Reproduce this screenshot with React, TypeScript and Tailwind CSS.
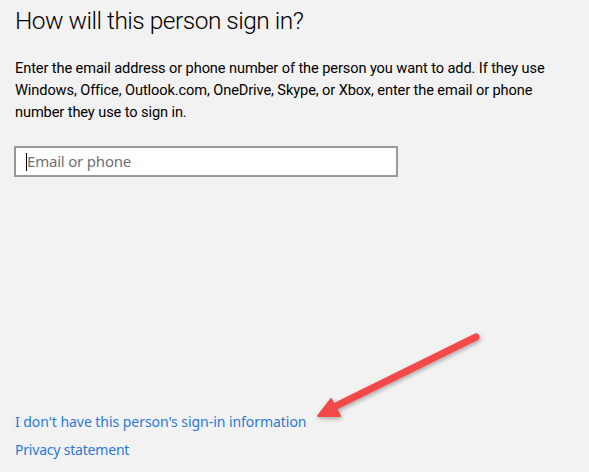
export default function App() {
  return (
    <div
      className="relative flex h-[472px] w-[589px] flex-col overflow-hidden bg-[#f2f2f2] pl-[15px] pr-[10px] text-[#000]"
      style={{ fontFamily: '"Noto Sans", "Open Sans", sans-serif' }}
    >
      <h1
        className="mt-[3px] text-[24.5px] font-light leading-[36px] tracking-[-0.5px]"
        style={{ fontFamily: 'Roboto, "Noto Sans", sans-serif' }}
      >
        How will this person sign in?
      </h1>
      <p
        className="mt-[18px] text-[14.6px] leading-[22px] tracking-[-0.1px]"
        style={{ fontFamily: 'Roboto, "Noto Sans", sans-serif' }}
      >
        Enter the email address or phone number of the person you want to add. If they use Windows, Office,
        Outlook.com, OneDrive, Skype, or Xbox, enter the email or phone number they use to sign in.
      </p>
      <div className="mt-[23px] flex h-[31px] w-[384px] -ml-px items-center border-2 border-[#999] bg-white pl-[10px]">
        <span className="h-[18px] w-px bg-black" />
        <span className="text-[15px] text-[#707070] tracking-[-0.2px]">Email or phone</span>
      </div>
      <div className="mt-auto mb-[11px] flex flex-col gap-[6px] text-[14px] leading-[22px] text-[#2a7ad6]">
        <a className="tracking-[-0.05px]">I don't have this person's sign-in information</a>
        <a className="tracking-[-0.2px]">Privacy statement</a>
      </div>
      <svg className="absolute left-0 top-0" width="589" height="472" viewBox="0 0 589 472">
        <defs>
          <filter id="sh" x="-20%" y="-20%" width="140%" height="140%">
            <feDropShadow dx="1" dy="2" stdDeviation="2" floodColor="#000" floodOpacity="0.3" />
          </filter>
        </defs>
        <g filter="url(#sh)" fill="#f44848" stroke="#f44848" strokeLinecap="round" strokeLinejoin="round">
          <line x1="476" y1="337" x2="334" y2="407" strokeWidth="7" fill="none" />
          <polygon points="318,416 331,399 340,416" strokeWidth="2" />
        </g>
      </svg>
    </div>
  );
}
